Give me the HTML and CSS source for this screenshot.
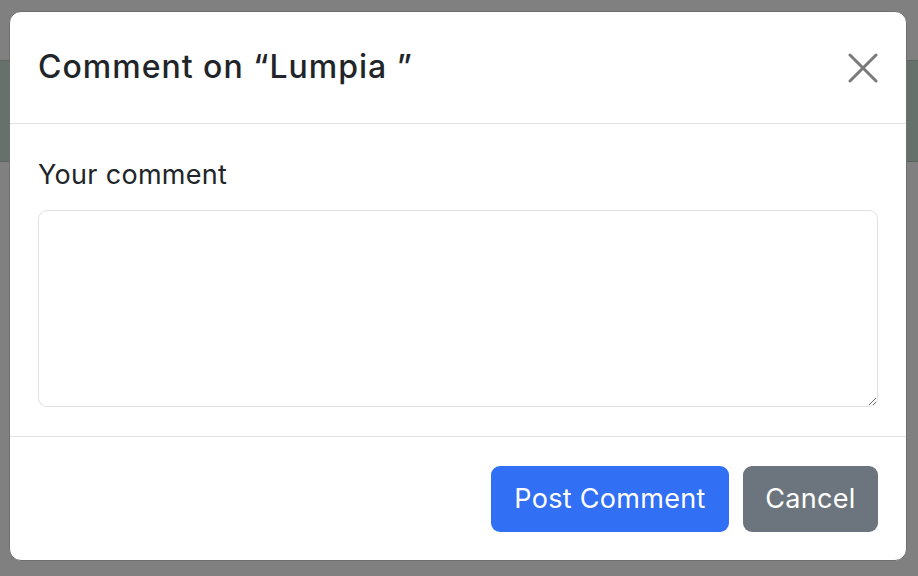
FILE: index.html
```html
<!DOCTYPE html>
<html lang="en">
<head>
<meta charset="utf-8">
<title>Comment</title>
<link rel="stylesheet" href="styles.css">
</head>
<body>
<div class="page">
  <div class="page-top"></div>
  <div class="page-band"></div>
</div>
<div class="backdrop">
  <div class="modal">
    <div class="modal-header">
      <h5 class="modal-title">Comment on “Lumpia ”</h5>
      <button class="btn-close" type="button" aria-label="Close">
        <svg viewBox="0 0 30 30" width="30" height="30"><path d="M2 2 L28 28 M28 2 L2 28" stroke="#7a7a7a" stroke-width="3" stroke-linecap="round" fill="none"/></svg>
      </button>
    </div>
    <div class="modal-body">
      <label class="form-label" for="c">Your comment</label>
      <textarea id="c" class="form-control"></textarea>
    </div>
    <div class="modal-footer">
      <button class="btn btn-primary" type="button">Post Comment</button>
      <button class="btn btn-secondary" type="button">Cancel</button>
    </div>
  </div>
</div>
</body>
</html>
```
FILE: styles.css
```css
html, body {
  margin: 0;
  padding: 0;
}
body {
  width: 918px;
  height: 576px;
  overflow: hidden;
  background: #808080;
  font-family: Inter, "Liberation Sans", sans-serif;
  color: #212529;
  position: relative;
}
.page {
  display: flex;
  flex-direction: column;
}
.page-top {
  height: 60px;
}
.page-band {
  height: 100px;
  background: #66716c;
  border-top: 1px solid #5a6560;
  border-bottom: 1px solid #5a6560;
}
.backdrop {
  position: absolute;
  inset: 0;
  padding: 11px 11px 0 9px;
}
.modal {
  width: 898px;
  height: 550px;
  box-sizing: border-box;
  background: #fff;
  border: 1px solid #6e6e6e;
  border-radius: 12px;
  display: flex;
  flex-direction: column;
}
.modal-header {
  height: 112px;
  box-sizing: border-box;
  border-bottom: 1px solid #dee2e6;
  padding: 0 28px;
  display: flex;
  align-items: center;
  justify-content: space-between;
}
.modal-title {
  margin: 0;
  font-size: 32px;
  font-weight: 500;
  letter-spacing: 1px;
  line-height: 1.2;
}
.btn-close {
  border: 0;
  background: transparent;
  padding: 0;
  width: 30px;
  height: 30px;
  display: flex;
}
.modal-body {
  padding: 31px 28px 29px;
  display: flex;
  flex-direction: column;
  border-bottom: 1px solid #dee2e6;
}
.form-label {
  font-size: 27px;
  line-height: 39px;
  margin-bottom: 16px;
  letter-spacing: 0.3px;
}
.form-control {
  display: block;
  height: 197px;
  box-sizing: border-box;
  border: 1px solid #dee2e6;
  border-radius: 9px;
  resize: vertical;
  font-family: inherit;
  font-size: 26px;
  margin: 0;
}
.modal-footer {
  flex: 1;
  display: flex;
  justify-content: flex-end;
  align-items: center;
  gap: 14px;
  padding: 0 28px;
}
.btn {
  height: 66px;
  border: 0;
  border-radius: 9px;
  color: #fff;
  font-family: inherit;
  font-size: 27px;
  padding: 0 22px;
  letter-spacing: 0.3px;
}
.btn-primary {
  background: #316ff5;
  width: 238px;
}
.btn-secondary {
  background: #6c757d;
  width: 135px;
}
```
